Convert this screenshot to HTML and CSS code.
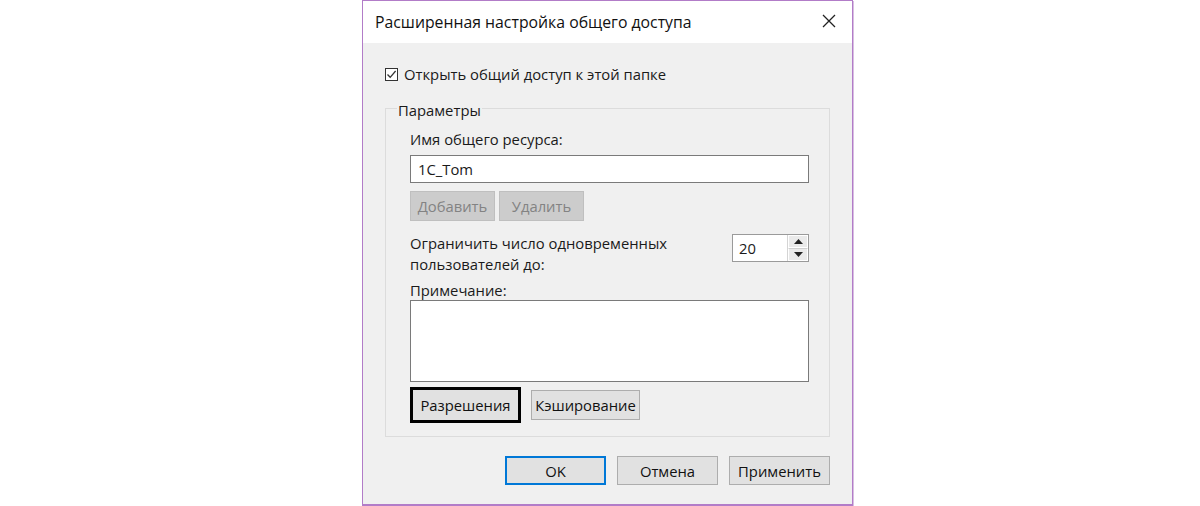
FILE: index.html
```html
<!DOCTYPE html>
<html lang="ru">
<head>
<meta charset="utf-8">
<link rel="stylesheet" href="styles.css">
</head>
<body>
<div class="dialog">
  <div class="titlebar">
    <span class="title">Расширенная настройка общего доступа</span>
    <svg class="close" width="14" height="14" viewBox="0 0 14 14"><path d="M1 1L13 13M13 1L1 13" stroke="#222" stroke-width="1.3" fill="none"/></svg>
  </div>
  <div class="body">
    <label class="check">
      <span class="box"><svg width="13" height="13" viewBox="0 0 13 13"><path d="M2.5 6.5L5.2 9.3L10.6 3" stroke="#333" stroke-width="1.3" fill="none"/></svg></span>
      <span>Открыть общий доступ к этой папке</span>
    </label>
    <fieldset class="group">
      <legend>Параметры</legend>
      <div class="lbl">Имя общего ресурса:</div>
      <div class="field name">1C_Tom</div>
      <div class="row btns">
        <button class="btn dis add">Добавить</button>
        <button class="btn dis del">Удалить</button>
      </div>
      <div class="row limit">
        <div class="limtext">Ограничить число одновременных<br>пользователей до:</div>
        <div class="spin">
          <span class="spinval">20</span>
          <span class="arrows">
            <span class="arr"><svg width="9" height="5" viewBox="0 0 9 5"><path d="M4.5 0L9 5H0z" fill="#222"/></svg></span>
            <span class="arr"><svg width="9" height="5" viewBox="0 0 9 5"><path d="M0 0H9L4.5 5z" fill="#222"/></svg></span>
          </span>
        </div>
      </div>
      <div class="lbl note">Примечание:</div>
      <div class="field area"></div>
      <div class="row perm">
        <button class="btn focus">Разрешения</button>
        <button class="btn cache">Кэширование</button>
      </div>
    </fieldset>
    <div class="footer">
      <button class="btn big default">OK</button>
      <button class="btn big">Отмена</button>
      <button class="btn big">Применить</button>
    </div>
  </div>
</div>
</body>
</html>
```
FILE: styles.css
```css
html, body { margin: 0; padding: 0; background: #fff; }
body {
  font-family: "Open Sans", "Liberation Sans", sans-serif;
  font-size: 14.8px;
  color: #1a1a1a;
  padding-left: 362px;
}
.dialog {
  width: 489px;
  height: 503px;
  border: 1px solid #b27cc8;
  border-bottom-width: 2px;
  box-shadow: 1px 1px 0 #d8bfe2;
  display: flex;
  flex-direction: column;
  background: #f0f0f0;
}
.titlebar {
  height: 42px;
  background: #fff;
  display: flex;
  align-items: center;
  justify-content: space-between;
  padding: 0 16px 0 12px;
}
.title { font-size: 15.8px; color: #111; }
.close { margin-top: -2px; }
.body { flex: 1; padding: 22px 22px 0 22px; display: flex; flex-direction: column; }
.check { display: flex; align-items: center; gap: 6px; height: 18px; }
.box {
  width: 13px; height: 13px; border: 1px solid #333; background: #fff;
  display: flex; align-items: center; justify-content: center; box-sizing: border-box;
}
.box svg { flex: none; }
.group {
  margin: 15px 0 0 0;
  padding: 0 20px 13px 24px;
  border: 1px solid #dcdcdc;
  box-sizing: border-box;
  width: 445px;
}
.group legend { padding: 0 1px; margin-left: -13px; font-size: 14.8px; position: relative; top: 2px; }
.lbl { margin-top: 11px; height: 20px; }
.field {
  background: #fff;
  border: 1px solid #7a7a7a;
  box-sizing: border-box;
  width: 399px;
}
.name { height: 28px; margin-top: 6px; padding: 3px 7px; }
.row { display: flex; }
.btns { gap: 4px; margin-top: 8px; }
.btn {
  font-family: inherit; font-size: 14.8px; color: #111;
  background: #e1e1e1; border: 1px solid #adadad;
  padding: 0; margin: 0; box-sizing: border-box;
}
.dis { background: #ccc; border-color: #bfbfbf; color: #838383; height: 30px; }
.add { width: 85px; }
.del { width: 85px; }
.limit { justify-content: space-between; margin-top: 12px; height: 44px; }
.limtext { line-height: 21px; margin-top: 0; }
.spin {
  width: 77px; height: 28px; background: #fff; border: 1px solid #9a9a9a;
  box-sizing: border-box; display: flex; margin-top: 1px;
}
.spinval { flex: 1; padding: 3px 0 0 6px; }
.arrows { width: 20px; display: flex; flex-direction: column; border-left: 1px solid #d4d4d4; }
.arr { flex: 1; display: flex; align-items: center; justify-content: center; background: #eaeaea; border: 1px solid #fff; }
.arr + .arr { border-top: 1px solid #cfcfcf; }
.note { margin-top: 3px; }
.area { height: 82px; margin-top: 0; }
.perm { gap: 10px; margin-top: 5px; align-items: center; }
.focus { width: 111px; height: 36px; border: 3px solid #000; background: #e1e1e1; outline: none; }
.cache { width: 109px; height: 30px; }
.footer { display: flex; justify-content: flex-end; gap: 11px; margin-top: 19px; }
.big { width: 101px; height: 29px; }
.default { border: 2px solid #0078d7; }
```
